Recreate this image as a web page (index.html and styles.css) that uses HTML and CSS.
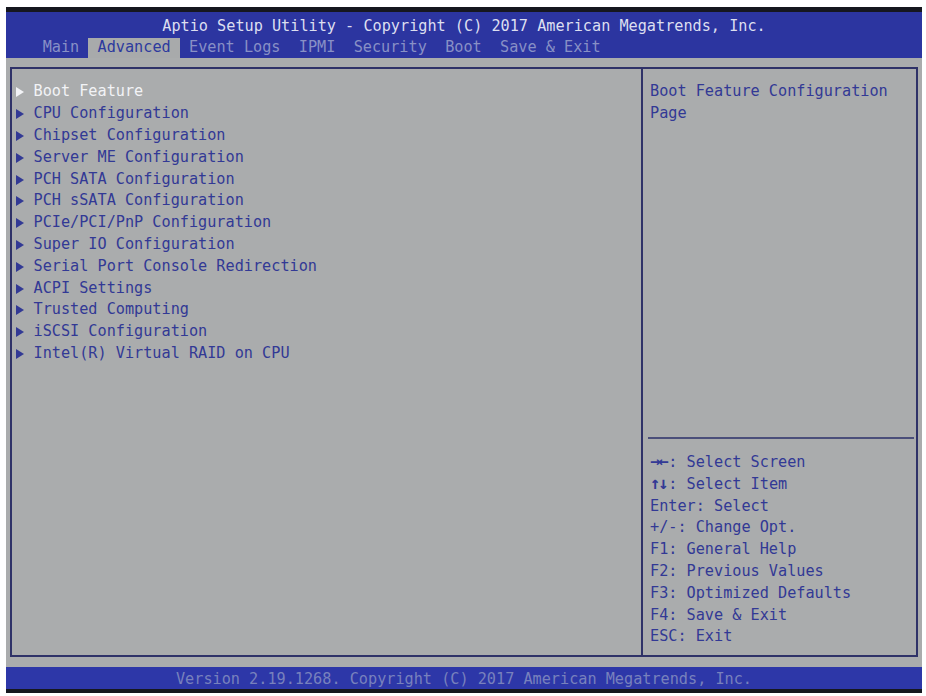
FILE: index.html
```html
<!DOCTYPE html>
<html>

  <head>
    <meta charset="utf-8">
    <title>Aptio Setup Utility</title>
    <link rel="stylesheet" href="styles.css">
  </head>

  <body>
    <div class="screen">
      <div class="bezel"></div>
      <div class="head">
        <div class="title">Aptio Setup Utility - Copyright (C) 2017 American Megatrends, Inc.</div>
        <div class="tabs">
          <span class="tab">Main</span>
          <span class="tab active">Advanced</span>
          <span class="tab">Event Logs</span>
          <span class="tab">IPMI</span>
          <span class="tab">Security</span>
          <span class="tab">Boot</span>
          <span class="tab">Save &amp; Exit</span>
        </div>
      </div>
      <div class="body">
        <div class="panel">
          <ul class="menu">
            <li class="item selected"><span class="arrow"></span>Boot Feature</li>
            <li class="item"><span class="arrow"></span>CPU Configuration</li>
            <li class="item"><span class="arrow"></span>Chipset Configuration</li>
            <li class="item"><span class="arrow"></span>Server ME Configuration</li>
            <li class="item"><span class="arrow"></span>PCH SATA Configuration</li>
            <li class="item"><span class="arrow"></span>PCH sSATA Configuration</li>
            <li class="item"><span class="arrow"></span>PCIe/PCI/PnP Configuration</li>
            <li class="item"><span class="arrow"></span>Super IO Configuration</li>
            <li class="item"><span class="arrow"></span>Serial Port Console Redirection</li>
            <li class="item"><span class="arrow"></span>ACPI Settings</li>
            <li class="item"><span class="arrow"></span>Trusted Computing</li>
            <li class="item"><span class="arrow"></span>iSCSI Configuration</li>
            <li class="item"><span class="arrow"></span>Intel(R) Virtual RAID on CPU</li>
          </ul>
          <div class="side">
            <div class="desc">Boot Feature Configuration Page</div>
            <div class="rule"></div>
            <ul class="keys">
              <li><b class="sym">&rarr;&larr;</b>: Select Screen</li>
              <li><b class="sym">&uarr;&darr;</b>: Select Item</li>
              <li>Enter: Select</li>
              <li>+/-: Change Opt.</li>
              <li>F1: General Help</li>
              <li>F2: Previous Values</li>
              <li>F3: Optimized Defaults</li>
              <li>F4: Save &amp; Exit</li>
              <li>ESC: Exit</li>
            </ul>
          </div>
        </div>
      </div>
      <div class="foot">Version 2.19.1268. Copyright (C) 2017 American Megatrends, Inc.</div>
      <div class="bezel bottom"></div>
    </div>
  </body>

</html>
```

FILE: styles.css
```css
body {
  margin: 0;
  background: #fff;
  font-family: "DejaVu Sans Mono", "Liberation Mono", monospace;
  font-size: 15.2px;
}

ul {
  margin: 0;
  padding: 0;
  list-style: none;
}

.screen {
  width: 916px;
  margin: 7px 0 0 6px;
}

.bezel {
  height: 5px;
  background: #16171f;
}

.bezel.bottom {
  height: 4px;
}

/* header: title + tab row */
.head {
  background: #2c35a0;
  padding-top: 2px;
}

.title,
.tabs {
  white-space: pre;
}

.title {
  height: 21.8px;
  line-height: 21.8px;
  padding-top: 2px;
  text-align: center;
  color: #dcdff0;
}

.tabs {
  display: flex;
  height: 19.8px;
  line-height: 19.8px;
  padding-left: 27.5px;
}

.tab {
  padding: 0 9.16px;
  color: #8890c6;
}

.tab.active {
  background: #a8aaab;
  color: #2d3a9e;
}

/* main gray area */
.body {
  background: #aaacad;
  padding: 9.4px 3.6px 10.4px;
}

.panel {
  display: grid;
  grid-template-columns: 1fr 275px;
  border: 2px solid #2f3268;
}

.menu {
  padding: 12.4px 0 6.4px 3.6px;
}

.item,
.keys li,
.desc {
  height: 21.8px;
  line-height: 21.8px;
  white-space: pre-wrap;
}

.desc {
  height: 348.8px;
}

.item {
  display: flex;
  align-items: center;
  color: #323995;
}

.item.selected {
  color: #f2f3f6;
}

.arrow {
  width: 18.32px;
  height: 21.8px;
  position: relative;
  flex: none;
}

.arrow::before {
  content: "";
  position: absolute;
  left: 1px;
  top: 6px;
  border-left: 8px solid currentColor;
  border-top: 5px solid transparent;
  border-bottom: 5px solid transparent;
}

.side {
  border-left: 2px solid #2f3268;
  padding: 12.4px 0 6.4px;
  display: flex;
  flex-direction: column;
}

.desc {
  padding-left: 6.6px;
  color: #323995;
}

.rule {
  height: 21.8px;
  position: relative;
}

.rule::before {
  content: "";
  position: absolute;
  left: 5px;
  right: 2px;
  top: 7px;
  border-top: 2px solid #4b4f7a;
}

.keys {
  padding-left: 6.6px;
  color: #323995;
}

.sym {
  display: inline-block;
  width: 18.3px;
  font-size: 17px;
  line-height: 1;
  letter-spacing: -2px;
}

.foot {
  background: #2d37a8;
  height: 17.8px;
  line-height: 17.8px;
  padding-top: 4px;
  text-align: center;
  white-space: pre;
  color: #7881bd;
}
```
